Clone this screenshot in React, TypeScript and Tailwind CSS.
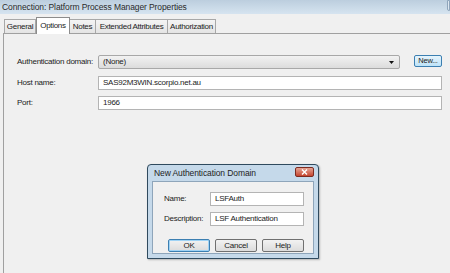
import React from "react";

function Tab({ label, active, w }: { label: string; active?: boolean; w: string }) {
  if (active) {
    return (
      <div className={`${w} h-[17px] -mb-px bg-white border border-[#8c8c8c] border-b-0 flex items-center justify-center text-[8px] tracking-[-0.3px] whitespace-nowrap text-[#222] relative z-10`}>
        {label}
      </div>
    );
  }
  return (
    <div className={`${w} h-[14px] bg-gradient-to-b from-[#f4f4f4] to-[#e4e4e4] border border-[#a8a8a8] border-b-0 -ml-px flex items-center justify-center text-[8px] tracking-[-0.3px] whitespace-nowrap text-[#222]`}>
      {label}
    </div>
  );
}

export default function App() {
  return (
    <div className="w-[450px] h-[273px] bg-[#f0f0f0] relative overflow-hidden font-['Liberation_Sans',sans-serif]">
      {/* title bar */}
      <div className="h-[14px] bg-gradient-to-b from-[#bccede] to-[#d6e4f0] flex items-center pl-[2px] text-[8.5px] tracking-[-0.1px] text-[#2a2a2a] relative">
        Connection: Platform Process Manager Properties
        <div className="absolute right-0 top-0 w-[3px] h-[11px] border border-[#8fa5bb] bg-[#dde7f0] rounded-bl-[2px]" />
      </div>
      {/* tabs */}
      <div className="flex items-end pl-[4px] pt-[3px]">
        <div className="w-[32px] h-[14px] bg-gradient-to-b from-[#f4f4f4] to-[#e4e4e4] border border-[#a8a8a8] border-b-0 flex items-center justify-center text-[8px] tracking-[-0.3px] whitespace-nowrap text-[#222]">General</div>
        <Tab label="Options" active w="w-[34px]" />
        <Tab label="Notes" w="w-[27px]" />
        <Tab label="Extended Attributes" w="w-[73px]" />
        <Tab label="Authorization" w="w-[49px]" />
      </div>
      {/* panel */}
      <div className="ml-[3px] h-[240px] border-t border-l border-[#a0a0a0] bg-[#f0f0f0] pt-[21px] pl-[13px] pr-[8px] flex flex-col gap-[7px] text-[8px] tracking-[-0.25px] whitespace-nowrap text-[#222]">
        <div className="flex items-center h-[14px]">
          <div className="w-[81px]">Authentication domain:</div>
          <div className="w-[302px] h-[14px] border border-[#a8a8a8] rounded-[2px] bg-gradient-to-b from-[#f2f2f2] to-[#dcdcdc] flex items-center pl-[4px] justify-between pr-[5px]">
            <span>(None)</span>
            <svg width="5" height="3" viewBox="0 0 5 3"><path d="M0 0h5L2.5 3z" fill="#111" /></svg>
          </div>
          <div className="ml-auto w-[28px] h-[12px] border border-[#3c7fb1] rounded-[2px] bg-gradient-to-b from-[#e6f4fc] to-[#bde3f8] flex items-center justify-center text-[7.5px] -mt-[2px]">
            New...
          </div>
        </div>
        <div className="flex items-center h-[14px]">
          <div className="w-[81px]">Host name:</div>
          <div className="flex-1 h-[14px] border border-[#b4b4b4] bg-white flex items-center pl-[4px]">SAS92M3WIN.scorpio.net.au</div>
        </div>
        <div className="flex items-center h-[14px] -mt-[1px]">
          <div className="w-[81px]">Port:</div>
          <div className="flex-1 h-[14px] border border-[#b4b4b4] bg-white flex items-center pl-[4px]">1966</div>
        </div>
      </div>

      {/* modal dialog */}
      <div className="absolute left-[147px] top-[164px] w-[172px] h-[95px] border border-[#2f4a5e] rounded-t-[4px] bg-[#c5d9ea] px-[4px] pb-[4px] flex flex-col shadow-[1px_1px_2px_rgba(0,0,0,0.25)]">
        <div className="h-[16px] flex items-center justify-between text-[8.5px] tracking-[-0.1px] text-[#1e1e1e] pl-[2px]">
          <span>New Authentication Domain</span>
          <div className="w-[19px] h-[10px] -mt-[2px] rounded-[2px] border border-[#7c2b20] bg-gradient-to-b from-[#e4a393] to-[#c4432e] flex items-center justify-center">
            <svg width="7" height="6" viewBox="0 0 7 6"><path d="M1 0.5L6 5.5M6 0.5L1 5.5" stroke="#fff" strokeWidth="1.4" /></svg>
          </div>
        </div>
        <div className="flex-1 bg-[#f0f0f0] border border-[#8ea5ba] pt-[10px] pl-[11px] pr-[9px] flex flex-col gap-[6px] text-[8px] tracking-[-0.25px] whitespace-nowrap text-[#222]">
          <div className="flex items-center h-[14px]">
            <div className="w-[46px]">Name:</div>
            <div className="flex-1 h-[14px] border border-[#b4b4b4] bg-white flex items-center pl-[4px]">LSFAuth</div>
          </div>
          <div className="flex items-center h-[14px]">
            <div className="w-[46px]">Description:</div>
            <div className="flex-1 h-[14px] border border-[#b4b4b4] bg-white flex items-center pl-[4px]">LSF Authentication</div>
          </div>
          <div className="flex justify-end gap-[5px] mt-[7px]">
            <div className="w-[42px] h-[13px] border border-[#3c7fb1] rounded-[2px] bg-gradient-to-b from-[#f2f2f2] to-[#dcdcdc] shadow-[inset_0_0_0_1px_#9fd3f5] flex items-center justify-center">OK</div>
            <div className="w-[42px] h-[13px] border border-[#707070] rounded-[2px] bg-gradient-to-b from-[#f2f2f2] to-[#dcdcdc] flex items-center justify-center">Cancel</div>
            <div className="w-[42px] h-[13px] border border-[#707070] rounded-[2px] bg-gradient-to-b from-[#f2f2f2] to-[#dcdcdc] flex items-center justify-center">Help</div>
          </div>
        </div>
      </div>
    </div>
  );
}
